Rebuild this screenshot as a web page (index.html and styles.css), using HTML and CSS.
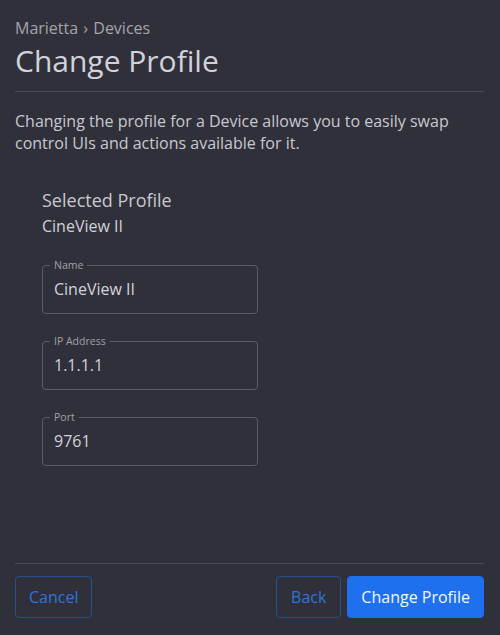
FILE: index.html
```html
<!DOCTYPE html>
<html>
<head>
<meta charset="utf-8">
<link rel="stylesheet" href="styles.css">
</head>
<body>
<div class="page">
  <header class="header">
    <div class="crumbs">Marietta <span class="sep">›</span> Devices</div>
    <h1 class="title">Change Profile</h1>
  </header>
  <main class="content">
    <p class="intro">Changing the profile for a Device allows you to easily swap control UIs and actions available for it.</p>
    <section class="profile">
      <h2 class="profile-heading">Selected Profile</h2>
      <div class="profile-name">CineView II</div>
      <div class="fields">
        <fieldset class="field">
          <legend class="field-label">Name</legend>
          <div class="field-value">CineView II</div>
        </fieldset>
        <fieldset class="field">
          <legend class="field-label">IP Address</legend>
          <div class="field-value">1.1.1.1</div>
        </fieldset>
        <fieldset class="field">
          <legend class="field-label">Port</legend>
          <div class="field-value">9761</div>
        </fieldset>
      </div>
    </section>
  </main>
  <footer class="footer">
    <button class="btn btn-outline">Cancel</button>
    <div class="footer-right">
      <button class="btn btn-outline btn-back">Back</button>
      <button class="btn btn-primary">Change Profile</button>
    </div>
  </footer>
</div>
</body>
</html>
```

FILE: styles.css
```css
html, body {
  margin: 0;
  padding: 0;
  background: #30303a;
}
body {
  font-family: "Open Sans", "Liberation Sans", sans-serif;
  color: #c8c8d0;
}
.page {
  width: 500px;
  height: 635px;
  box-sizing: border-box;
  padding: 0 16px 0 15px;
  display: flex;
  flex-direction: column;
}
.header {
  padding-top: 17px;
  border-bottom: 1px solid #4a4a54;
  padding-bottom: 11px;
}
.crumbs {
  font-size: 16px;
  line-height: 22px;
  color: #a4a4ac;
}
.sep {
  padding: 0 1px;
}
.title {
  margin: 3px 0 0;
  font-size: 30px;
  line-height: 38px;
  font-weight: 400;
  color: #d2d2da;
}
.content {
  flex: 1;
}
.intro {
  margin: 18px 0 0;
  font-size: 16px;
  line-height: 22px;
  color: #c8c8d0;
}
.profile {
  padding: 34px 0 0 27px;
}
.profile-heading {
  margin: 0;
  font-size: 18px;
  line-height: 24px;
  font-weight: 400;
  color: #c8c8d0;
}
.profile-name {
  margin-top: 3px;
  font-size: 16px;
  line-height: 22px;
  color: #d0d0d8;
}
.fields {
  margin-top: 22px;
  display: flex;
  flex-direction: column;
  gap: 21px;
}
.field {
  width: 216px;
  height: 55px;
  box-sizing: border-box;
  margin: 0;
  padding: 0 11px;
  border: 1px solid #5c5c66;
  border-radius: 4px;
}
.field-label {
  font-size: 10.5px;
  line-height: 12px;
  color: #a0a0a8;
  padding: 0 4px;
  margin-left: -4px;
}
.field-value {
  font-size: 16px;
  line-height: 22px;
  margin-top: 7px;
  color: #d2d2da;
}
.footer {
  border-top: 1px solid #4a4a54;
  padding: 12px 0 17px;
  display: flex;
  justify-content: space-between;
  align-items: center;
}
.footer-right {
  display: flex;
  gap: 6px;
}
.btn {
  font-family: inherit;
  font-size: 16px;
  height: 42px;
  box-sizing: border-box;
  border-radius: 4px;
  padding: 0 13px;
  cursor: pointer;
}
.btn-back {
  padding: 0 14px;
}
.btn-outline {
  background: transparent;
  border: 1px solid #284f8e;
  color: #2e74dc;
}
.btn-primary {
  background: #1f70ee;
  border: 1px solid #1f70ee;
  color: #f4f6fa;
}
```
